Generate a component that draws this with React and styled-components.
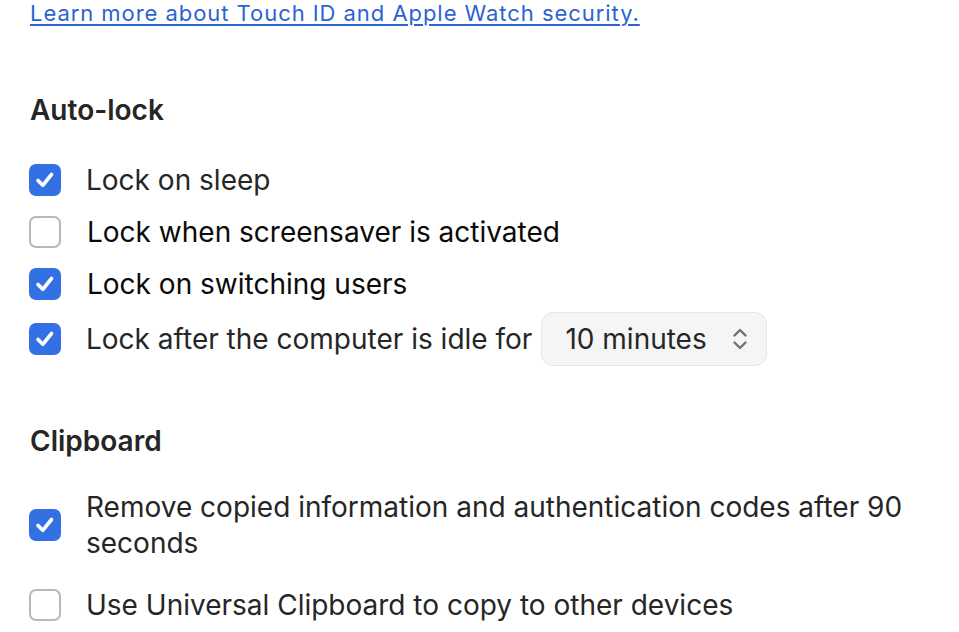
import React from "react";
import styled, { createGlobalStyle } from "styled-components";

const Global = createGlobalStyle`
body{margin:0;background:#fff;font-family:Inter,"Noto Sans",sans-serif;color:#262626;}
`
const Page = styled.div`
padding:0 30px;
`
const LearnLink = styled.a`
display:block;
font-size:22px;
line-height:26px;
letter-spacing:0.95px;
color:#2b63d3;
text-decoration:underline;
text-underline-offset:3px;
text-decoration-thickness:1.5px;
`
const Section = styled.section`
margin-top:${p => p.$top}px;
`
const Heading = styled.h2`
margin:0;
font-size:28px;
font-weight:600;
line-height:32px;
`
const List = styled.div`
display:flex;
flex-direction:column;
margin-top:${p => p.$top}px;
gap:${p => p.$gap}px;
`
const Row = styled.label`
display:flex;
align-items:center;
min-height:${p => p.$h}px;
`
const Box = styled.span`
flex:none;
width:32px;
height:32px;
margin-left:-1px;
box-sizing:border-box;
border-radius:7px;
display:flex;
align-items:center;
justify-content:center;
background:${p => p.$on ? "#3370e3" : "#fff"};
border:${p => p.$on ? "none" : "2px solid #b8b8b8"};
`
const Text = styled.span`
margin-left:${p => p.$indent || 25}px;
font-size:28px;
line-height:36px;
color:${p => p.$dark ? "#0a0a0a" : "#262626"};
`
const Select = styled.div`
display:flex;
align-items:center;
justify-content:space-between;
margin:-6px 0 -6px 9px;
width:226px;
height:54px;
box-sizing:border-box;
padding:0 18px 0 23px;
background:#f5f5f5;
border:1px solid #e6e6e6;
border-radius:12px;
font-size:28px;
`

function Check({ on }) {
  return (
    <Box $on={on}>
      {on && (
        <svg width="32" height="32" viewBox="0 0 32 32">
          <path d="M9 16.5 L13.8 21.3 L22.5 10.5" fill="none" stroke="#fff" strokeWidth="3.6" strokeLinecap="round" strokeLinejoin="round" />
        </svg>
      )}
    </Box>
  )
}

function Chevrons() {
  return (
    <svg width="16" height="26" viewBox="0 0 16 26">
      <path d="M2.5 9.5 L8 4 L13.5 9.5 M2.5 16.5 L8 22 L13.5 16.5" fill="none" stroke="#707070" strokeWidth="2.4" strokeLinecap="round" strokeLinejoin="round" />
    </svg>
  )
}

export default function App() {
  return (
    <Page>
      <Global />
      <LearnLink href="#">Learn more about Touch ID and Apple Watch security.</LearnLink>
      <Section $top={68}>
        <Heading>Auto-lock</Heading>
        <List $top={36} $gap={16}>
          <Row $h={36}><Check on /><Text>Lock on sleep</Text></Row>
          <Row $h={36}><Check /><Text $indent={26} $dark>Lock when screensaver is activated</Text></Row>
          <Row $h={36}><Check on /><Text $indent={26} $dark>Lock on switching users</Text></Row>
          <Row $h={42}><Check on /><Text>Lock after the computer is idle for</Text>
            <Select><span>10 minutes</span><Chevrons /></Select>
          </Row>
        </List>
      </Section>
      <Section $top={65}>
        <Heading>Clipboard</Heading>
        <List $top={32} $gap={26}>
          <Row $h={72}><Check on /><Text>Remove copied information and authentication codes after 90 seconds</Text></Row>
          <Row $h={36}><Check /><Text>Use Universal Clipboard to copy to other devices</Text></Row>
        </List>
      </Section>
    </Page>
  )
}
